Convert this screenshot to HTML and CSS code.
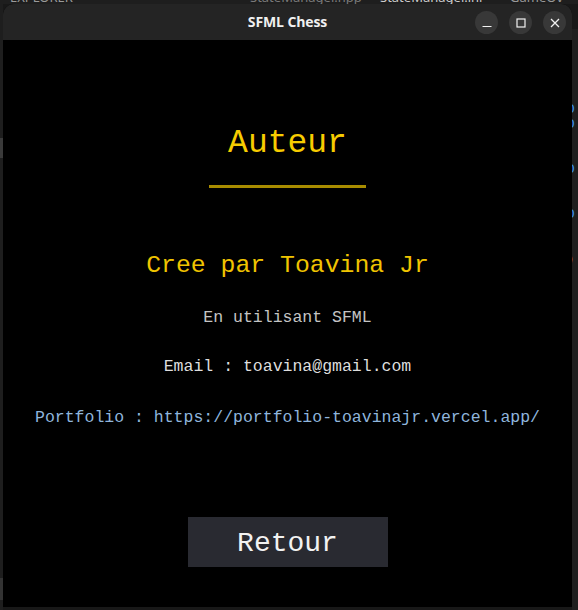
FILE: index.html
```html
<!DOCTYPE html>
<html lang="fr">
<head>
<meta charset="utf-8">
<title>SFML Chess</title>
<link rel="stylesheet" href="styles.css">
</head>
<body>
<div class="desktop">
  <div class="top-strip">
    <span class="ts ts1">EXPLORER</span>
    <span class="ts ts2">StateManager.hpp</span>
    <span class="ts ts3">StateManager.inl</span>
    <span class="ts ts4">GameOv</span>
  </div>
  <div class="middle">
    <div class="left-strip"><div class="lbar"></div><div class="lbar2"></div></div>
    <div class="window">
      <div class="titlebar">
        <div class="title">SFML Chess</div>
        <div class="controls">
          <span class="ctl">
            <svg width="10" height="10" viewBox="0 0 10 10"><path d="M0.5 8.5H9.5" stroke="#f2f2f2" stroke-width="1.2"/></svg>
          </span>
          <span class="ctl">
            <svg width="10" height="10" viewBox="0 0 10 10"><rect x="1" y="1" width="8" height="8" fill="none" stroke="#f2f2f2" stroke-width="1.2"/></svg>
          </span>
          <span class="ctl">
            <svg width="10" height="10" viewBox="0 0 10 10"><path d="M1 1L9 9M9 1L1 9" stroke="#f2f2f2" stroke-width="1.3"/></svg>
          </span>
        </div>
      </div>
      <div class="content">
        <h1 class="heading">Auteur</h1>
        <div class="rule"></div>
        <p class="creator">Cree par Toavina Jr</p>
        <p class="info using">En utilisant SFML</p>
        <p class="info email">Email : toavina@gmail.com</p>
        <p class="info portfolio">Portfolio : https://portfolio-toavinajr.vercel.app/</p>
        <button class="back">Retour</button>
      </div>
    </div>
    <div class="right-strip">
      <div class="rtop"></div>
      <span class="code c1">D</span>
      <span class="code c2">D</span>
      <span class="code c3">D</span>
      <span class="code c4">D</span>
      <span class="code c5">)</span>
    </div>
  </div>
</div>
</body>
</html>
```
FILE: styles.css
```css
html, body {
  margin: 0;
  padding: 0;
}
body {
  width: 578px;
  height: 610px;
  overflow: hidden;
  background: #181818;
}
.desktop {
  display: flex;
  flex-direction: column;
  height: 610px;
}
.top-strip {
  height: 4px;
  overflow: hidden;
  display: flex;
  font-family: "Noto Sans", sans-serif;
  font-size: 13px;
  line-height: 13px;
  background: #1e1e1e;
}
.ts {
  color: #9a9a9a;
  margin-top: -9px;
  white-space: nowrap;
}
.ts1 { margin-left: 10px; width: 240px; }
.ts2 { color: #7a7a7a; width: 130px; }
.ts3 { color: #cccccc; width: 130px; }
.ts4 { color: #999; }
.middle {
  display: flex;
  flex: 1;
}
.left-strip {
  width: 3px;
  background: #1e1e1e;
  display: flex;
  flex-direction: column;
}
.lbar {
  margin-top: 134px;
  height: 20px;
  background: #3a3a3a;
}
.lbar2 {
  margin-top: 420px;
  height: 22px;
  background: #333333;
}
.window {
  width: 569px;
  height: 603px;
  display: flex;
  flex-direction: column;
  background: #000;
  border-radius: 11px 11px 0 0;
  overflow: hidden;
}
.titlebar {
  height: 36px;
  box-sizing: border-box;
  padding-bottom: 2px;
  background: #242424;
  display: flex;
  align-items: center;
  justify-content: center;
  position: relative;
}
.title {
  font-family: "Open Sans", "Noto Sans", sans-serif;
  font-weight: 700;
  font-size: 14px;
  color: #f0f0f0;
  letter-spacing: -0.1px;
}
.controls {
  position: absolute;
  right: 6px;
  top: 7px;
  display: flex;
  gap: 11px;
}
.ctl {
  width: 23px;
  height: 23px;
  border-radius: 50%;
  background: #383838;
  display: flex;
  align-items: center;
  justify-content: center;
}
.content {
  flex: 1;
  display: flex;
  flex-direction: column;
  align-items: center;
  font-family: "Liberation Mono", "DejaVu Sans Mono", monospace;
}
.heading {
  margin: 84px 0 0;
  font-size: 33px;
  line-height: 40px;
  font-weight: 400;
  color: #f7cc00;
}
.rule {
  margin-top: 21px;
  width: 157px;
  height: 3px;
  background: #a88c00;
}
.creator {
  margin: 62px 0 0;
  font-size: 24.8px;
  line-height: 30px;
  color: #f0c400;
}
.info {
  margin: 0;
  font-size: 16.5px;
  line-height: 20px;
  white-space: nowrap;
}
.using {
  margin-top: 28px;
  color: #c4c4c4;
}
.email {
  margin-top: 29px;
  color: #dedede;
}
.portfolio {
  margin-top: 31px;
  color: #8fb5dc;
}
.back {
  margin-top: 89px;
  width: 200px;
  height: 50px;
  border: 0;
  padding: 0;
  background: #292a31;
  color: #f2f2f2;
  font-family: "Liberation Mono", "DejaVu Sans Mono", monospace;
  font-size: 28px;
  line-height: 54px;
}
.right-strip {
  width: 6px;
  background: #1f1f1f;
  display: flex;
  flex-direction: column;
  overflow: hidden;
  font-family: "DejaVu Sans Mono", monospace;
  font-size: 13px;
  line-height: 14px;
}
.rtop {
  height: 25px;
  background: #181818;
  flex: none;
}
.code {
  color: #3b8eea;
  margin-left: -5px;
}
.c1 { margin-top: 73px; }
.c2 { margin-top: 1px; }
.c3 { margin-top: 31px; }
.c4 { margin-top: 31px; }
.c5 { margin-top: 32px; color: #d19a66; }
```
